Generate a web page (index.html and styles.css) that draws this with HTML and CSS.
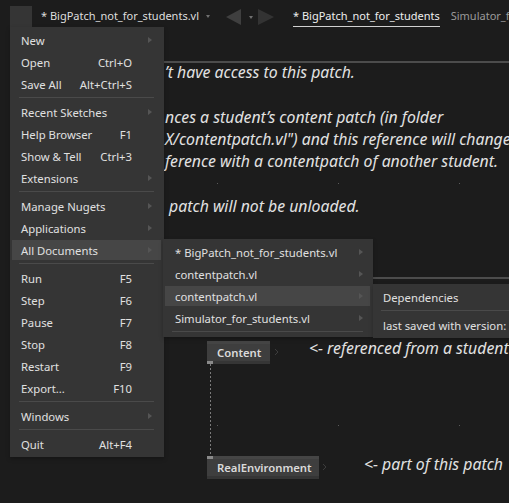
FILE: index.html
```html
<!DOCTYPE html>
<html>
<head>
<meta charset="utf-8">
<link rel="stylesheet" href="styles.css">
</head>
<body>
<div class="app">
  <header class="topbar">
    <div class="menu-btn"></div>
    <div class="doc-select"><span class="doc-name">* BigPatch_not_for_students.vl</span><span class="caret"></span></div>
    <div class="nav">
      <span class="tri-left"></span><span class="caret"></span><span class="tri-right"></span>
    </div>
    <nav class="tabs">
      <span class="tab active">* BigPatch_not_for_students</span>
      <span class="tab">Simulator_for_students</span>
    </nav>
  </header>

  <main class="canvas">
    <div class="hline hline-top"></div>
    <div class="hline hline-mid"></div>
    <div class="comment comment-main">’t have access to this patch.

nces a student’s content patch (in folder
X/contentpatch.vl") and this reference will change
ference with a contentpatch of another student.

 patch will not be unloaded.</div>
    <span class="dot d1"></span><span class="dot d2"></span><span class="dot d3"></span>
    <span class="dot d4"></span><span class="dot d5"></span><span class="dot d6"></span>

    <div class="node node-content">
      <div class="node-strip top"></div>
      <div class="node-body">Content</div>
      <div class="node-strip bottom"><span class="pin"></span></div>
    </div>
    <svg class="chev chev-content" width="5" height="8" viewBox="0 0 5 8"><polyline points="1,1 4,4 1,7" fill="none" stroke="#3c3c3c" stroke-width="1"/></svg>
    <div class="link"></div>
    <div class="node node-env">
      <div class="node-strip top"><span class="pin"></span></div>
      <div class="node-body">RealEnvironment</div>
      <div class="node-strip bottom"></div>
    </div>
    <svg class="chev chev-env" width="5" height="8" viewBox="0 0 5 8"><polyline points="1,1 4,4 1,7" fill="none" stroke="#3c3c3c" stroke-width="1"/></svg>

    <div class="comment comment-ref">&lt;- referenced from a student's patch</div>
    <div class="comment comment-part">&lt;- part of this patch</div>
  </main>

  <div class="menu main-menu">
    <div class="item"><span>New</span><span class="key"></span><span class="arrow"></span></div>
    <div class="item"><span>Open</span><span class="key">Ctrl+O</span><span></span></div>
    <div class="item"><span>Save All</span><span class="key">Alt+Ctrl+S</span><span></span></div>
    <div class="sep"></div>
    <div class="item"><span>Recent Sketches</span><span class="key"></span><span class="arrow"></span></div>
    <div class="item"><span>Help Browser</span><span class="key">F1</span><span></span></div>
    <div class="item"><span>Show &amp; Tell</span><span class="key">Ctrl+3</span><span></span></div>
    <div class="item"><span>Extensions</span><span class="key"></span><span class="arrow"></span></div>
    <div class="sep"></div>
    <div class="item"><span>Manage Nugets</span><span class="key"></span><span class="arrow"></span></div>
    <div class="item"><span>Applications</span><span class="key"></span><span class="arrow"></span></div>
    <div class="item hl"><span>All Documents</span><span class="key"></span><span class="arrow"></span></div>
    <div class="sep"></div>
    <div class="item"><span>Run</span><span class="key">F5</span><span></span></div>
    <div class="item"><span>Step</span><span class="key">F6</span><span></span></div>
    <div class="item"><span>Pause</span><span class="key">F7</span><span></span></div>
    <div class="item"><span>Stop</span><span class="key">F8</span><span></span></div>
    <div class="item"><span>Restart</span><span class="key">F9</span><span></span></div>
    <div class="item"><span>Export...</span><span class="key">F10</span><span></span></div>
    <div class="sep"></div>
    <div class="item"><span>Windows</span><span class="key"></span><span class="arrow"></span></div>
    <div class="sep"></div>
    <div class="item"><span>Quit</span><span class="key">Alt+F4</span><span></span></div>
  </div>

  <div class="menu sub-docs">
    <div class="item"><span>* BigPatch_not_for_students.vl</span><span class="arrow"></span></div>
    <div class="item"><span>contentpatch.vl</span><span class="arrow"></span></div>
    <div class="item hl"><span>contentpatch.vl</span><span class="arrow"></span></div>
    <div class="item"><span>Simulator_for_students.vl</span><span class="arrow"></span></div>
    <div class="sep"></div>
  </div>

  <div class="menu sub-deps">
    <div class="item"><span>Dependencies</span></div>
    <div class="sep"></div>
    <div class="item"><span>last saved with version: 2021.4.0</span></div>
  </div>
</div>
</body>
</html>
```

FILE: styles.css
```css
* { box-sizing: border-box; }

html, body {
  margin: 0;
  padding: 0;
  background: #1c1c1c;
}

.app {
  position: relative;
  width: 509px;
  height: 503px;
  overflow: hidden;
  display: flex;
  flex-direction: column;
  font-family: "Noto Sans", "Open Sans", sans-serif;
  font-size: 11.3px;
  color: #dcdcdc;
}

/* ---------- top bar ---------- */
.topbar {
  height: 30px;
  flex: none;
  display: flex;
  align-items: flex-start;
  white-space: nowrap;
  font-size: 11px;
}

.menu-btn {
  flex: none;
  width: 22px;
  height: 22px;
  margin: 6px 0 0 10px;
  background: #353535;
}

.doc-select {
  flex: none;
  display: flex;
  align-items: center;
  margin-left: 9px;
  height: 31px;
}

.doc-name {
  color: #dedede;
}

.caret {
  display: inline-block;
  width: 0;
  height: 0;
  border-left: 2.5px solid transparent;
  border-right: 2.5px solid transparent;
  border-top: 3px solid #707070;
}

.doc-select .caret { margin-left: 7px; margin-top: 1px; }

.nav {
  flex: none;
  display: flex;
  align-items: center;
  height: 34px;
  margin-left: 16px;
}

.tri-left {
  width: 0;
  height: 0;
  border-top: 8px solid transparent;
  border-bottom: 8px solid transparent;
  border-right: 15px solid #3f3f3f;
}

.nav .caret { margin-left: 8px; margin-top: 1px; }

.tri-right {
  margin-left: 5px;
  width: 0;
  height: 0;
  border-top: 8px solid transparent;
  border-bottom: 8px solid transparent;
  border-left: 16px solid #333333;
}

.tabs {
  flex: none;
  display: flex;
  margin-left: 19px;
  gap: 11px;
}

.tab {
  height: 27px;
  padding-top: 6px;
  line-height: 19px;
  border-bottom: 1px solid transparent;
  color: #9a9a9a;
}

.tab.active {
  color: #eeeeee;
  border-bottom-color: #d0d0d0;
}

/* ---------- canvas ---------- */
.canvas {
  position: relative;
  flex: 1;
}

.hline {
  position: absolute;
  right: 0;
  height: 2px;
  background: #4c4c4c;
}
.hline-top { left: 150px; top: 31px; }
.hline-mid { left: 300px; top: 247px; }

.comment {
  position: absolute;
  font-style: italic;
  font-size: 15.8px;
  line-height: 22.3px;
  color: #e2e2e2;
  white-space: pre;
}

.comment-main { left: 165px; top: 31px; }
.comment-ref { left: 309px; top: 307px; }
.comment-part { left: 364px; top: 423px; }

.dot {
  position: absolute;
  width: 1px;
  height: 1px;
  background: #5a5a5a;
}
.d1 { left: 217px; top: 153px; }
.d2 { left: 338px; top: 153px; }
.d3 { left: 459px; top: 153px; }
.d4 { left: 217px; top: 395px; }
.d5 { left: 338px; top: 395px; }
.d6 { left: 459px; top: 395px; }

.node {
  position: absolute;
  left: 207px;
  display: flex;
  flex-direction: column;
  height: 23px;
}
.node-content { top: 311px; width: 63px; }
.node-env { top: 426px; width: 112px; }

.node-strip {
  height: 3px;
  position: relative;
}
.node-strip.top { background: #454545; }
.node-strip.bottom { background: #353535; }

.node-body {
  flex: 1;
  background: #3e3e3e;
  font-weight: 600;
  font-size: 11.3px;
  line-height: 17px;
  padding-left: 10px;
  color: #dadada;
  white-space: nowrap;
}

.pin {
  position: absolute;
  left: 0;
  top: 0;
  width: 6px;
  height: 3px;
  background: #8a8a8a;
}

.chev { position: absolute; }
.chev-content { left: 274px; top: 318px; }
.chev-env { left: 322px; top: 433px; }

.link {
  position: absolute;
  left: 210px;
  top: 334px;
  height: 92px;
  width: 1px;
  background: repeating-linear-gradient(to bottom, #7a7a7a 0 2px, transparent 2px 4px);
}

/* ---------- menus ---------- */
.menu {
  position: absolute;
  background: #353535;
  padding: 2px;
  display: flex;
  flex-direction: column;
  box-shadow: 0 2px 4px rgba(0, 0, 0, 0.25);
  white-space: nowrap;
}

.item {
  height: 20px;
  margin: 1px 1px 1px 0;
  display: grid;
  align-items: center;
  color: #e0e0e0;
}

.item.hl { background: #464646; }

.arrow {
  width: 0;
  height: 0;
  border-top: 3.5px solid transparent;
  border-bottom: 3.5px solid transparent;
  border-left: 4px solid #555555;
}

.sep {
  height: 1px;
  background: #4a4a4a;
}

.main-menu {
  left: 10px;
  top: 27px;
  width: 154px;
}
.main-menu .item {
  grid-template-columns: 1fr auto 29px;
  padding-left: 9px;
}
.main-menu .key { text-align: right; }
.main-menu .arrow { margin-left: 16px; }
.main-menu .sep { margin: 2px 8px 3px 7px; }

.sub-docs {
  left: 163px;
  top: 239px;
  width: 210px;
}
.sub-docs .item {
  grid-template-columns: 1fr 15px;
  padding-left: 10px;
}
.sub-docs .arrow { margin-left: 4px; }
.sub-docs .sep { margin: 2px 8px 3px 7px; }

.sub-deps {
  left: 373px;
  top: 284px;
  width: 190px;
}
.sub-deps .item {
  grid-template-columns: 1fr;
  padding-left: 8px;
}
.sub-deps .sep { margin: 2px 0 3px 6px; }
```
